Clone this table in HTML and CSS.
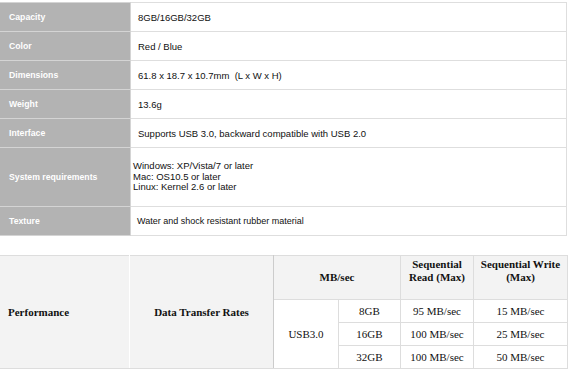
FILE: index.html
```html
<!DOCTYPE html>
<html>
<head>
<meta charset="utf-8">
<link rel="stylesheet" href="styles.css">
</head>
<body>
<table class="spec">
  <tr><th>Capacity</th><td>8GB/16GB/32GB</td></tr>
  <tr><th>Color</th><td>Red / Blue</td></tr>
  <tr><th>Dimensions</th><td>61.8 x 18.7 x 10.7mm &nbsp;(L x W x H)</td></tr>
  <tr><th>Weight</th><td>13.6g</td></tr>
  <tr><th>Interface</th><td>Supports USB 3.0, backward compatible with USB 2.0</td></tr>
  <tr class="tall"><th>System requirements</th><td class="lines">Windows: XP/Vista/7 or later<br>Mac: OS10.5 or later<br>Linux: Kernel 2.6 or later</td></tr>
  <tr><th>Texture</th><td class="small">Water and shock resistant rubber material</td></tr>
</table>

<table class="perf">
  <tr class="head">
    <th rowspan="4" class="label">Performance</th>
    <th rowspan="4" class="group">Data Transfer Rates</th>
    <th colspan="2" class="unit">MB/sec</th>
    <th class="seq read">Sequential<br>Read (Max)</th>
    <th class="seq write">Sequential Write<br>(Max)</th>
  </tr>
  <tr>
    <td rowspan="3" class="iface">USB3.0</td>
    <td class="size">8GB</td>
    <td>95 MB/sec</td>
    <td>15 MB/sec</td>
  </tr>
  <tr>
    <td class="size">16GB</td>
    <td>100 MB/sec</td>
    <td>25 MB/sec</td>
  </tr>
  <tr>
    <td class="size">32GB</td>
    <td>100 MB/sec</td>
    <td>50 MB/sec</td>
  </tr>
</table>
</body>
</html>
```

FILE: styles.css
```css
html, body {
  margin: 0;
  padding: 0;
  background: #ffffff;
}

body {
  padding-top: 2px;
}

/* product specification sheet */
.spec {
  width: 567px;
  border-collapse: collapse;
  font-family: "Liberation Sans", Arial, sans-serif;
  font-size: 9.5px;
  color: #111111;
}

.spec th,
.spec td {
  height: 28px;
  padding: 0;
  border: 1px solid #dedede;
  vertical-align: middle;
  text-align: left;
}

.spec th {
  width: 121px;
  padding-left: 9px;
  background: #b3b3b3;
  color: #ffffff;
  font-weight: bold;
  font-size: 8.7px;
  border-left: 0;
  border-color: #d4d4d4;
}

.spec td {
  padding-left: 7px;
}

.spec .tall th,
.spec .tall td {
  height: 58px;
}

.spec td.lines {
  line-height: 10.5px;
  padding-left: 2px;
}

.spec td.small {
  font-size: 9px;
  padding-left: 6px;
}

/* transfer-rate table */
.perf {
  margin-top: 19px;
  width: 568px;
  border-collapse: collapse;
  font-family: "Liberation Serif", "Times New Roman", serif;
  font-size: 11px;
  color: #111111;
}

.perf th,
.perf td {
  padding: 0;
  border: 1px solid #dddddd;
  text-align: center;
  vertical-align: middle;
}

.perf tr {
  height: 23px;
}

.perf tr.head {
  height: 44px;
}

.perf tr.head th {
  background: #f3f3f3;
  font-weight: bold;
  line-height: 13px;
}

.perf th.label {
  width: 121px;
  padding-left: 8px;
  text-align: left;
  background: #b3b3b3;
  border-left: 0;
  border-right: 1px solid #ffffff;
}

.perf th.group {
  width: 143px;
  background: #f4f4f4;
  border-right: 1px solid #cccccc;
}

.perf th.seq {
  padding-bottom: 14px;
}

.perf th.read {
  width: 72px;
}

.perf td.iface {
  width: 64px;
}

.perf td.size {
  width: 61px;
}
```
